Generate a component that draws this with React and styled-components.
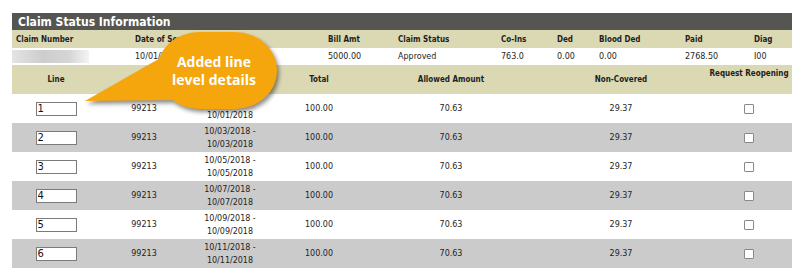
import React from "react";
import styled, { createGlobalStyle } from "styled-components";

const GlobalStyle = createGlobalStyle`
  html, body {
    margin: 0;
    padding: 0;
    background: #fff;
  }
  body {
    font-family: "DejaVu Sans", Verdana, sans-serif;
    color: #1e1e1e;
  }
`;

const claim = {
  dates: "10/01/2018",
  billAmt: "5000.00",
  status: "Approved",
  coIns: "763.0",
  ded: "0.00",
  bloodDed: "0.00",
  paid: "2768.50",
  diag: "I00",
};

const lines = [1, 2, 3, 4, 5, 6].map((n) => {
  const day = String(2 * n - 1).padStart(2, "0");
  return {
    line: n,
    code: "99213",
    from: `10/${day}/2018`,
    to: `10/${day}/2018`,
    total: "100.00",
    allowed: "70.63",
    nonCovered: "29.37",
  };
});

const Page = styled.div`
  position: relative;
  width: 808px;
  height: 270px;
  overflow: hidden;
  box-sizing: border-box;
  padding: 13px 0 0 12px;
`;

const Panel = styled.div`
  width: 780px;
`;

const TitleBar = styled.div`
  height: 17px;
  display: flex;
  align-items: center;
  padding-left: 6px;
  background: #555652;
  color: #fff;
  font-family: "DejaVu Sans Condensed", "Open Sans", sans-serif;
  font-weight: bold;
  font-size: 12px;
`;

const claimCols = "119px 193px 70px 103px 56px 42px 86px 69px 1fr";
const lineCols = "88px 88px 84px 94px 170px 170px 86px";

const ClaimRow = styled.div`
  display: grid;
  grid-template-columns: ${claimCols};
  align-items: center;
  height: ${(p) => (p.$head ? 18 : 17)}px;
  background: ${(p) => (p.$head ? "#dbd8b4" : "#fff")};
  font-size: 8px;
  font-family: ${(p) =>
    p.$head
      ? `"DejaVu Sans Condensed", "Open Sans", sans-serif`
      : `"DejaVu Sans", Verdana, sans-serif`};
  font-weight: ${(p) => (p.$head ? "bold" : "normal")};
`;

const ClaimCell = styled.div`
  padding-left: 4px;
  white-space: nowrap;
`;

const Blurred = styled.div`
  height: 13px;
  width: 77px;
  background: linear-gradient(
    to right,
    #e4e4e4,
    #cdcdcd 40%,
    #d6d6d6 75%,
    #f4f4f4
  );
`;

const LineHead = styled.div`
  display: grid;
  grid-template-columns: ${lineCols};
  height: 29px;
  background: #dbd8b4;
  font-family: "DejaVu Sans Condensed", "Open Sans", sans-serif;
  font-weight: bold;
  font-size: 8px;
`;

const HeadCell = styled.div`
  display: flex;
  justify-content: center;
  align-items: ${(p) => (p.$top ? "flex-start" : "center")};
  padding-top: ${(p) => (p.$top ? "4px" : "0")};
  white-space: nowrap;
`;

const LineRow = styled.div`
  display: grid;
  grid-template-columns: ${lineCols};
  align-items: center;
  height: 29px;
  background: ${(p) => (p.$shade ? "#cbcbcb" : "#fff")};
  font-size: 8px;
  line-height: 13px;
`;

const Cell = styled.div`
  display: flex;
  flex-direction: column;
  align-items: center;
  white-space: nowrap;
`;

const LineInput = styled.input`
  box-sizing: border-box;
  width: 41px;
  height: 14px;
  margin: 0;
  padding: 0 1px;
  border: 1px solid #7b7b7b;
  background: #fff;
  font-family: "DejaVu Sans", sans-serif;
  font-size: 10px;
  color: #111;
  outline: none;
`;

const Check = styled.span`
  display: block;
  width: 10px;
  height: 10px;
  box-sizing: border-box;
  border: 1px solid #8a8a8a;
  background: #fff;
  border-radius: 1px;
`;

const Callout = styled.div`
  position: absolute;
  left: 80px;
  top: 26px;
  width: 205px;
  height: 92px;
  svg {
    display: block;
    filter: drop-shadow(2px 3px 2px rgba(0, 0, 0, 0.45));
  }
`;

const CalloutText = styled.div`
  position: absolute;
  left: 74px;
  top: 8px;
  width: 120px;
  height: 74px;
  display: flex;
  flex-direction: column;
  align-items: center;
  justify-content: center;
  color: #fff;
  font-family: "Open Sans", "DejaVu Sans", sans-serif;
  font-weight: bold;
  font-size: 14px;
  line-height: 18px;
`;

function CalloutBubble() {
  return (
    <Callout>
      <svg width="205" height="92" viewBox="0 0 205 92">
        <g fill="#f5a60c">
          <rect x="77" y="6" width="120" height="77" rx="42" ry="38" />
          <polygon points="5,75 84,30 92,74" />
        </g>
      </svg>
      <CalloutText>
        <span>Added line</span>
        <span>level details</span>
      </CalloutText>
    </Callout>
  );
}

export default function App() {
  return (
    <>
      <GlobalStyle />
      <Page>
        <Panel>
          <TitleBar>Claim Status Information</TitleBar>
          <ClaimRow $head>
            <ClaimCell>Claim Number</ClaimCell>
            <ClaimCell>Date of Service</ClaimCell>
            <ClaimCell>Bill Amt</ClaimCell>
            <ClaimCell>Claim Status</ClaimCell>
            <ClaimCell>Co-Ins</ClaimCell>
            <ClaimCell>Ded</ClaimCell>
            <ClaimCell>Blood Ded</ClaimCell>
            <ClaimCell>Paid</ClaimCell>
            <ClaimCell>Diag</ClaimCell>
          </ClaimRow>
          <ClaimRow>
            <Blurred />
            <ClaimCell>{claim.dates}</ClaimCell>
            <ClaimCell>{claim.billAmt}</ClaimCell>
            <ClaimCell>{claim.status}</ClaimCell>
            <ClaimCell>{claim.coIns}</ClaimCell>
            <ClaimCell>{claim.ded}</ClaimCell>
            <ClaimCell>{claim.bloodDed}</ClaimCell>
            <ClaimCell>{claim.paid}</ClaimCell>
            <ClaimCell>{claim.diag}</ClaimCell>
          </ClaimRow>
          <LineHead>
            <HeadCell>Line</HeadCell>
            <HeadCell>Proc</HeadCell>
            <HeadCell />
            <HeadCell>Total</HeadCell>
            <HeadCell>Allowed Amount</HeadCell>
            <HeadCell>Non-Covered</HeadCell>
            <HeadCell $top>Request Reopening</HeadCell>
          </LineHead>
          {lines.map((l, i) => (
            <LineRow key={l.line} $shade={i % 2 === 1}>
              <Cell>
                <LineInput readOnly defaultValue={l.line} />
              </Cell>
              <Cell>{l.code}</Cell>
              <Cell>
                <span>{l.from} -</span>
                <span>{l.to}</span>
              </Cell>
              <Cell>{l.total}</Cell>
              <Cell>{l.allowed}</Cell>
              <Cell>{l.nonCovered}</Cell>
              <Cell>
                <Check />
              </Cell>
            </LineRow>
          ))}
        </Panel>
        <CalloutBubble />
      </Page>
    </>
  );
}
